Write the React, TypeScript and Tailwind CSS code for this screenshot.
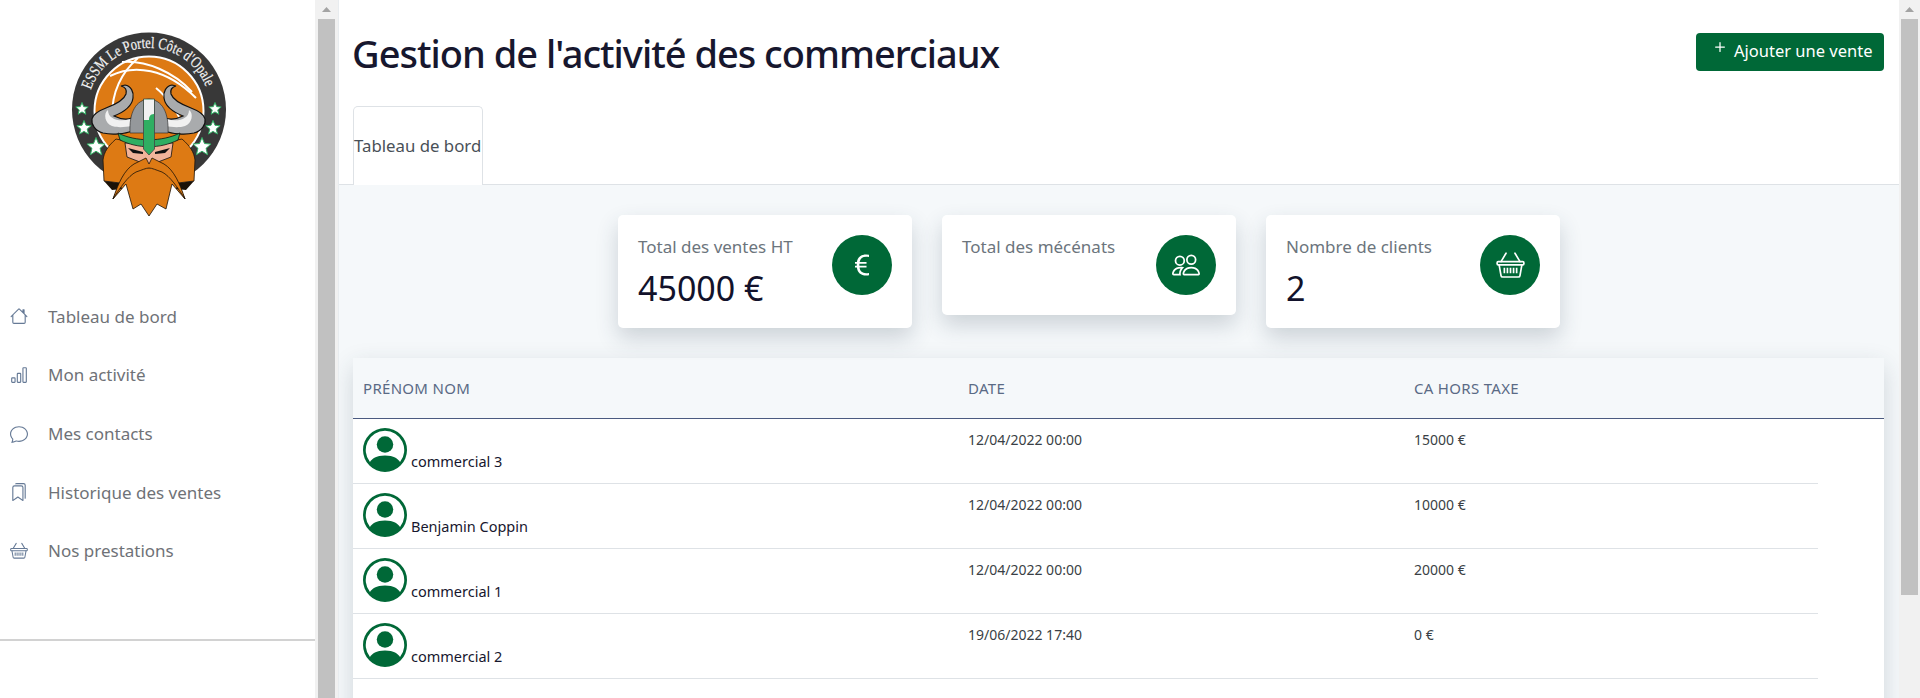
import { BsBarChart, BsBookmarks, BsChat, BsCurrencyEuro, BsHouse, BsPeople, BsPersonCircle, BsPlus } from "react-icons/bs"

const navItems = [
  { label: "Tableau de bord", icon: <BsHouse size={18} /> },
  { label: "Mon activité", icon: <BsBarChart size={18} /> },
  { label: "Mes contacts", icon: <BsChat size={18} /> },
  { label: "Historique des ventes", icon: <BsBookmarks size={18} /> },
  { label: "Nos prestations", icon: <BasketIcon size={18} /> },
]

const sales = [
  { name: "commercial 3", date: "12/04/2022 00:00", amount: "15000 €" },
  { name: "Benjamin Coppin", date: "12/04/2022 00:00", amount: "10000 €" },
  { name: "commercial 1", date: "12/04/2022 00:00", amount: "20000 €" },
  { name: "commercial 2", date: "19/06/2022 17:40", amount: "0 €" },
]

function BasketIcon({ size }: { size: number }) {
  return (
    <svg width={size} height={size} viewBox="0 0 26 24" fill="none" stroke="currentColor" strokeWidth="1.5">
      <path d="M9 1 4.5 8.5M17 1l4.5 7.5" strokeLinecap="round" />
      <rect x="1" y="8.500" width="24" height="3" rx="1" />
      <path d="M2.800 11.500 4.500 21a1.500 1.500 0 0 0 1.500 1.300h14a1.500 1.500 0 0 0 1.500-1.300l1.700-9.500" />
      <path d="M7.500 14v5M10.250 14v5M13 14v5M15.750 14v5M18.500 14v5" />
    </svg>
  )
}

function Star({ x, y, r }: { x: number; y: number; r: number }) {
  const points = Array.from({ length: 10 }, (_, i) => {
    const a = -Math.PI / 2 + (i * Math.PI) / 5
    const d = i % 2 === 0 ? r : r * 0.45
    return `${x + d * Math.cos(a)},${y + d * Math.sin(a)}`
  }).join(" ")
  return <polygon points={points} fill="#fff" stroke="#2fae62" strokeWidth="1" />
}

function Logo() {
  return (
    <svg width="160" height="190" viewBox="70 30 160 190">
      <defs>
        <path id="arc" d="M91 90 A 61 61 0 0 1 207 90" />
      </defs>
      <circle cx="149" cy="109.500" r="77" fill="#383838" />
      <circle cx="149" cy="111" r="54.500" fill="#dd7a14" stroke="#fff" strokeWidth="2" />
      <g fill="none" stroke="#fff" strokeWidth="2">
        <path d="M110 76c24-12 56-8 86 22" />
        <path d="M122 62c24-2 52 10 70 30" />
        <path d="M112 116c0-24 10-44 26-58" />
        <path d="M156 88c10 8 22 24 26 36" />
      </g>
      <text fill="#f4f4f4" stroke="#f4f4f4" strokeWidth="0.2" fontFamily="'Liberation Serif', serif" fontSize="16">
        <textPath href="#arc" textLength="150" lengthAdjust="spacingAndGlyphs">
          ESSM  Le Portel Côte d'Opale
        </textPath>
      </text>
      <Star x={82} y={109} r={6.500} />
      <Star x={84} y={128} r={7.500} />
      <Star x={96} y={147} r={9.500} />
      <Star x={215} y={109} r={6.500} />
      <Star x={213} y={128} r={7.500} />
      <Star x={202} y={147} r={9.500} />
      {/* horns */}
      <path
        d="M125 85C131 86 134 92 133 98 132 106 124 112 114 116 120 119 126 120 132 118L132 131C125 134 112 135 103 133 95 131 91 124 92 119 93 114 98 111 106 108 114 105 124 100 126 94 127 90 125 87 121 86Z"
        fill="#a9abad"
        stroke="#111"
        strokeWidth="1.200"
      />
      <path
        d="M172 85C166 86 163 92 164 98 165 106 173 112 183 116 177 119 171 120 165 118L165 131C172 134 185 135 194 133 202 131 206 124 205 119 204 114 199 111 191 108 183 105 173 100 171 94 170 90 172 87 176 86Z"
        fill="#a9abad"
        stroke="#111"
        strokeWidth="1.200"
      />
      <path d="M108 110C103 113 105 124 112 126 118 128 126 127 131 126V119C120 122 108 120 108 110Z" fill="#f1f1f1" />
      <path d="M189 110C194 113 192 124 185 126 179 128 171 127 166 126V119C177 122 189 120 189 110Z" fill="#f1f1f1" />
      {/* beard and hair */}
      <path
        d="M116 139C108 146 104 152 103 160L104 181 120 183 113 199 126 184 133 209 141 204 149 216 157 204 166 209 172 184 185 199 178 183 194 181 195 160C194 152 190 146 182 139L149 146Z"
        fill="#dd7a14"
        stroke="#1b1208"
        strokeWidth="0.800"
      />
      <path d="M125 143H173L171 157 158 162 149 168 140 162 127 157Z" fill="#f2b49a" stroke="#111" strokeWidth="0.800" />
      <path d="M128 148 143 152V154L133 153ZM170 148 155 152V154L165 153Z" fill="#111" />
      <path d="M104 181 120 183 122 189 112 190ZM194 181 178 183 176 189 186 190Z" fill="#1b1208" />
      <path
        d="M113 199C118 184 124 170 134 164L146 158 149 164 152 158 164 164C174 170 180 184 185 199 178 188 170 176 162 172 156 170 152 168 149 168 146 168 142 170 136 172 128 176 120 188 113 199Z"
        fill="#dd7a14"
        stroke="#1b1208"
        strokeWidth="0.800"
      />
      {/* helmet */}
      <path d="M130 133C129 112 136 100 149 99 162 100 169 112 168 133Z" fill="#95989b" stroke="#222" strokeWidth="0.600" />
      <path d="M118 133C136 142 162 142 180 133L178 140C160 149 138 149 120 140Z" fill="#2fae62" stroke="#111" strokeWidth="0.800" />
      <path d="M143.500 99H154.500V149L149 155 143.500 149Z" fill="#2fae62" stroke="#444" strokeWidth="0.800" />
      <path d="M144 99.500H154V114C150 114 149 117 149 120H144Z" fill="#f1f1f1" />
    </svg>
  )
}

function Scrollbar({ thumb, className }: { thumb: string; className: string }) {
  return (
    <div className={`flex shrink-0 flex-col items-center bg-[#f1f1f1] ${className}`}>
      <svg width="17" height="19" viewBox="0 0 17 19">
        <path d="M4 12 8.500 7 13 12Z" fill="#a3a3a3" />
      </svg>
      <div className={`w-[17px] bg-[#c1c1c1] ${thumb}`} />
    </div>
  )
}

function StatCard({ title, value, icon, height }: { title: string; value?: string; icon: React.ReactNode; height: string }) {
  return (
    <div className={`flex w-[294px] justify-between rounded-[5px] bg-white p-5 shadow-[0_10px_22px_rgba(40,60,80,0.2)] ${height}`}>
      <div>
        <div className="text-[17px] leading-[24px] text-[#6c757d]">{title}</div>
        {value && <div className="mt-[5px] text-[34px] leading-[48px] text-[#12122b]">{value}</div>}
      </div>
      <div className="flex h-[60px] w-[60px] items-center justify-center rounded-full bg-[#006837] text-white">{icon}</div>
    </div>
  )
}

export default function App() {
  return (
    <div className="flex h-[698px] overflow-hidden bg-white font-['Noto_Sans',sans-serif]">
      <aside className="w-[315px] shrink-0">
        <div className="flex justify-start pl-[70px] pt-[30px]">
          <Logo />
        </div>
        <nav className="mt-[67px]">
          {navItems.map((item) => (
            <div key={item.label} className="flex h-[58.7px] items-center text-[17px] text-[#6f7277]">
              <span className="flex w-[48px] justify-start pl-[10px] text-[#667a96]">{item.icon}</span>
              {item.label}
            </div>
          ))}
        </nav>
        <div className="mt-[59px] h-[2px] bg-[#d2d2d2]" />
      </aside>
      <Scrollbar className="w-[23px]" thumb="flex-1" />
      <main className="min-w-0 flex-1 overflow-hidden border-l border-[#e8ecef] bg-[#f5f8fa]">
        <header className="h-[185px] border-b border-[#dee2e6] bg-white pl-[13px] pr-[15px]">
          <div className="flex h-[106px] items-start justify-between">
            <h1 className="pt-[25px] text-[38px] font-medium leading-[56px] tracking-[-1px] text-[#17172e]">Gestion de l'activité des commerciaux</h1>
            <button className="mt-[33px] flex h-[38px] w-[188px] items-start rounded-[4px] bg-[#006837] pl-[14px] text-[16.5px] text-white">
              <BsPlus size={20} className="mt-[4px]" />
              <span className="ml-[4px] mt-[6px] leading-[24px]">Ajouter une vente</span>
            </button>
          </div>
          <div className="ml-[1px] flex h-[79px] w-[130px] items-center whitespace-nowrap rounded-t-[5px] border border-b-0 border-[#dee2e6] bg-white text-[16.8px] text-[#495057]">
            Tableau de bord
          </div>
        </header>
        <section className="flex items-start gap-[30px] pl-[279px] pt-[30px]">
          <StatCard title="Total des ventes HT" value="45000 €" icon={<BsCurrencyEuro size={28} />} height="h-[113px]" />
          <StatCard title="Total des mécénats" icon={<BsPeople size={28} />} height="h-[100px]" />
          <StatCard title="Nombre de clients" value="2" icon={<BasketIcon size={29} />} height="h-[113px]" />
        </section>
        <section className="ml-[14px] mr-[15px] mt-[30px] h-[400px] rounded-t-[5px] bg-white text-[14px] shadow-[0_8px_24px_rgba(40,60,80,0.18)]">
          <div className="grid h-[61px] grid-cols-[605px_446px_1fr] items-center border-b border-[#4a5a80] bg-[#f5f8fa] pl-[10px] text-[15px] tracking-[0.3px] text-[#5a6a85]">
            <div>PRÉNOM NOM</div>
            <div>DATE</div>
            <div>CA HORS TAXE</div>
          </div>
          {sales.map((sale) => (
            <div key={sale.name} className="grid h-[65px] w-[1465px] grid-cols-[595px_446px_1fr] border-b border-[#dee2e6] pl-[10px] pt-[8px] text-[#3a3f45]">
              <div className="flex items-end gap-[4px] pb-[11px]">
                <BsPersonCircle size={44} className="text-[#006837]" />
                <span className="mb-[2px] text-[14.5px] leading-[18px] text-[#17172e]">{sale.name}</span>
              </div>
              <div className="pl-[10px] pt-[3px] leading-[20px]">{sale.date}</div>
              <div className="pl-[10px] pt-[3px] leading-[20px]">{sale.amount}</div>
            </div>
          ))}
        </section>
      </main>
      <Scrollbar className="w-[21px]" thumb="h-[576px]" />
    </div>
  )
}
